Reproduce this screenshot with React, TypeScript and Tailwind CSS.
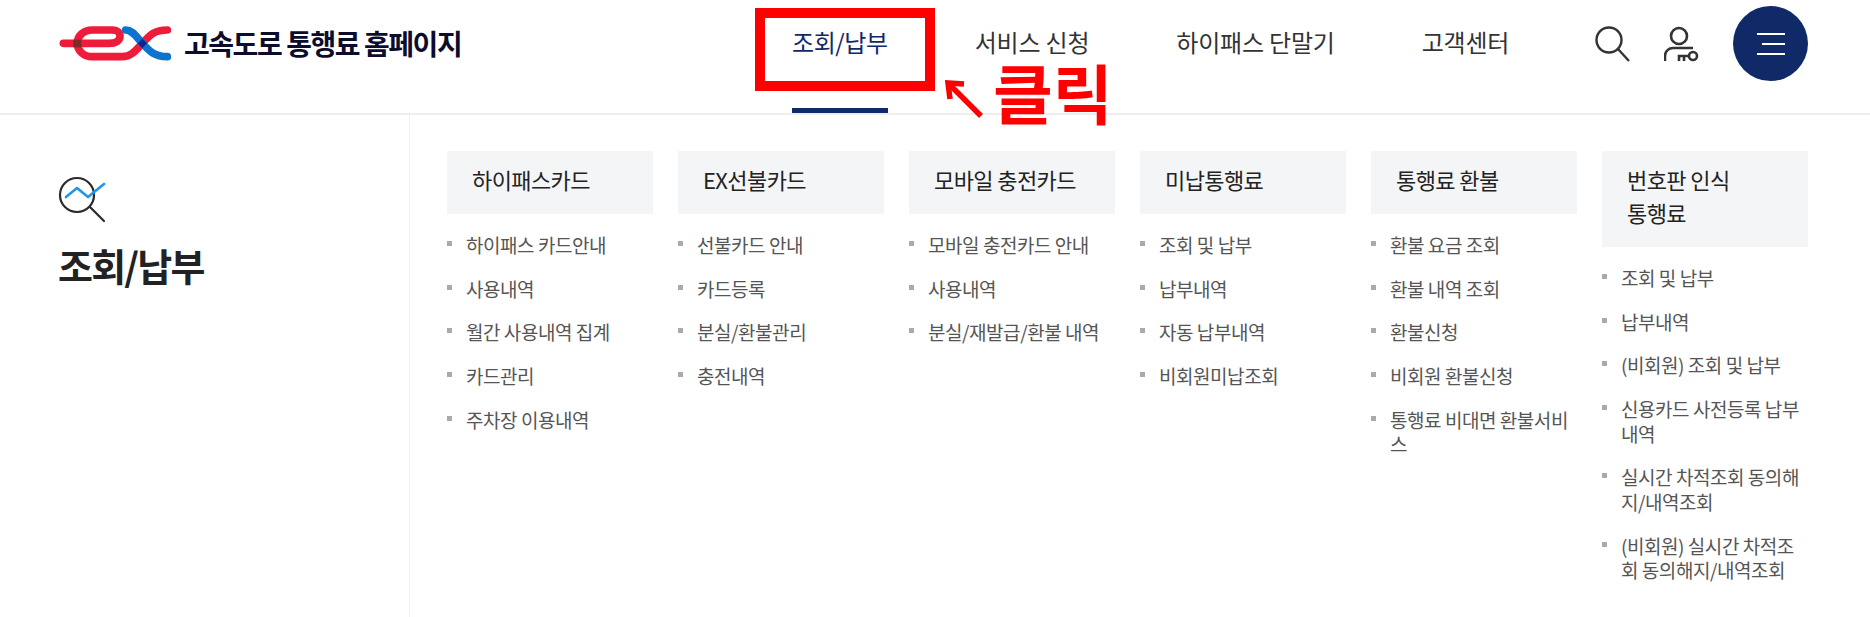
import React from "react";

const columns: { title: React.ReactNode; items: string[] }[] = [
  { title: "하이패스카드", items: ["하이패스 카드안내", "사용내역", "월간 사용내역 집계", "카드관리", "주차장 이용내역"] },
  { title: "EX선불카드", items: ["선불카드 안내", "카드등록", "분실/환불관리", "충전내역"] },
  { title: "모바일 충전카드", items: ["모바일 충전카드 안내", "사용내역", "분실/재발급/환불 내역"] },
  { title: "미납통행료", items: ["조회 및 납부", "납부내역", "자동 납부내역", "비회원미납조회"] },
  { title: "통행료 환불", items: ["환불 요금 조회", "환불 내역 조회", "환불신청", "비회원 환불신청", "통행료 비대면 환불서비스"] },
  {
    title: "번호판 인식 통행료",
    items: ["조회 및 납부", "납부내역", "(비회원) 조회 및 납부", "신용카드 사전등록 납부내역", "실시간 차적조회 동의해지/내역조회", "(비회원) 실시간 차적조회 동의해지/내역조회"],
  },
];

function Logo() {
  return (
    <svg width="113" height="37" viewBox="55 75 339 111" fill="none" strokeLinecap="round" strokeLinejoin="round" strokeWidth="23">
      <path d="M68 130H205C225 130 238 122 238 108C238 96 228 90 215 90H155C128 90 110 108 110 130C110 152 128 170 155 170H245C268 170 280 158 305 130C328 105 340 90 380 90" stroke="#ee1c3a" />
      <path d="M255 90C275 90 285 108 305 130C325 152 340 170 380 170" stroke="#0a74cf" />
      <rect x="98" y="119" width="24" height="23" fill="#7f2a2a" />
      <path d="M305 116L319 130L305 145L291 130Z" fill="#1a1f8f" />
    </svg>
  );
}

function SearchIcon() {
  return (
    <svg width="36" height="36" viewBox="0 0 36 36" fill="none" stroke="#333" strokeWidth="2.4">
      <circle cx="15" cy="14" r="12.5" />
      <path d="M24 23L35 35" />
    </svg>
  );
}

function UserKeyIcon() {
  return (
    <svg width="36" height="36" viewBox="0 0 36 36" fill="none" stroke="#333" strokeWidth="2.6">
      <circle cx="15" cy="10" r="8" />
      <path d="M1 35V30C1 25 5 22 9 22H29" />
      <circle cx="29" cy="30" r="4" />
      <path d="M25 30H15V35M20 30V35" />
    </svg>
  );
}

function TopicIcon() {
  return (
    <svg width="48" height="48" viewBox="0 0 48 48" fill="none" strokeLinecap="round">
      <circle cx="19" cy="20" r="17" stroke="#2b2b2b" strokeWidth="2.2" />
      <path d="M32 32L46 46" stroke="#2b2b2b" strokeWidth="2.2" />
      <path d="M8 22L19 13L30 22L46 9" stroke="#1e96ea" strokeWidth="2.6" strokeLinejoin="round" />
    </svg>
  );
}

function Arrow() {
  return (
    <svg width="40" height="40" viewBox="0 0 40 40" fill="none" stroke="#ff0000" strokeWidth="5.5">
      <path d="M36 36L5 5" />
      <path d="M19 4L3 3L5 19" />
    </svg>
  );
}

export default function App() {
  return (
    <div className="relative h-[617px] w-[1870px] overflow-hidden bg-white [font-family:'Noto_Sans_CJK_KR','Noto_Sans',sans-serif]">
      <header className="flex h-[115px] items-start border-b-2 border-[#eeeeee]">
        <div className="flex w-[733px] items-center pl-[59px] pt-[24px]">
          <Logo />
          <span className="ml-[12px] text-[28px] font-bold leading-[38px] tracking-[-1.45px] text-[#0c0c2c]">고속도로 통행료 홈페이지</span>
        </div>
        <nav className="flex h-[113px] gap-[87px] pl-[59px]">
          <div className="relative h-full pt-[24px] text-[24px] leading-[36px] tracking-[-0.4px] text-[#102a68]">
            조회/납부
            <div className="absolute bottom-0 left-0 h-[5px] w-full bg-[#102a68]" />
          </div>
          <div className="pt-[24px] text-[24px] leading-[36px] tracking-[-0.2px] text-[#333333]">서비스 신청</div>
          <div className="pt-[24px] text-[24px] leading-[36px] tracking-[-0.2px] text-[#333333]">하이패스 단말기</div>
          <div className="pt-[24px] text-[24px] leading-[36px] tracking-[-0.2px] text-[#333333]">고객센터</div>
        </nav>
        <div className="ml-[85px] flex items-start pt-[26px]">
          <SearchIcon />
          <div className="ml-[34px]"><UserKeyIcon /></div>
          <div className="-mt-[20px] ml-[33px] flex h-[75px] w-[75px] flex-col items-end justify-center gap-[8px] rounded-full bg-[#102a68] pr-[23px]">
            <div className="h-[2px] w-[28px] bg-white" />
            <div className="h-[2px] w-[23px] bg-white" />
            <div className="h-[2px] w-[28px] bg-white" />
          </div>
        </div>
      </header>

      <main className="flex h-[502px]">
        <aside className="w-[410px] border-r border-[#eeeeee] pl-[58px] pt-[60px]">
          <TopicIcon />
          <h2 className="mt-[18px] text-[38px] font-bold leading-[48px] tracking-[-1.8px] text-[#222222]">조회/납부</h2>
        </aside>
        <div className="flex items-start gap-[25px] pl-[37px] pt-[36px]">
          {columns.map((col, i) => (
            <section key={i} className="w-[206px]">
              <h3 className="break-keep bg-[#f4f5f7] pb-[18px] pl-[25px] pr-[25px] pt-[12px] text-[22px] font-normal leading-[33px] tracking-[-0.6px] text-[#222222]">{col.title}</h3>
              <ul className="mt-[18.75px] flex flex-col gap-[19.25px]">
                {col.items.map((item, j) => (
                  <li key={j} className="relative break-all pl-[19px] text-[19px] leading-[24.5px] tracking-[-0.45px] text-[#555555]">
                    <span className="absolute left-0 top-[8px] h-[5px] w-[5px] bg-[#aaaaaa]" />
                    {item}
                  </li>
                ))}
              </ul>
            </section>
          ))}
        </div>
      </main>

      <div className="absolute left-[755px] top-[8px] h-[83px] w-[180px] border-[10px] border-[#ff0000]" />
      <div className="absolute left-[945px] top-[80px]"><Arrow /></div>
      <div className="absolute left-[993px] top-[43px] text-[65px] font-bold leading-[96px] text-[#ff0000]">클릭</div>
    </div>
  );
}
